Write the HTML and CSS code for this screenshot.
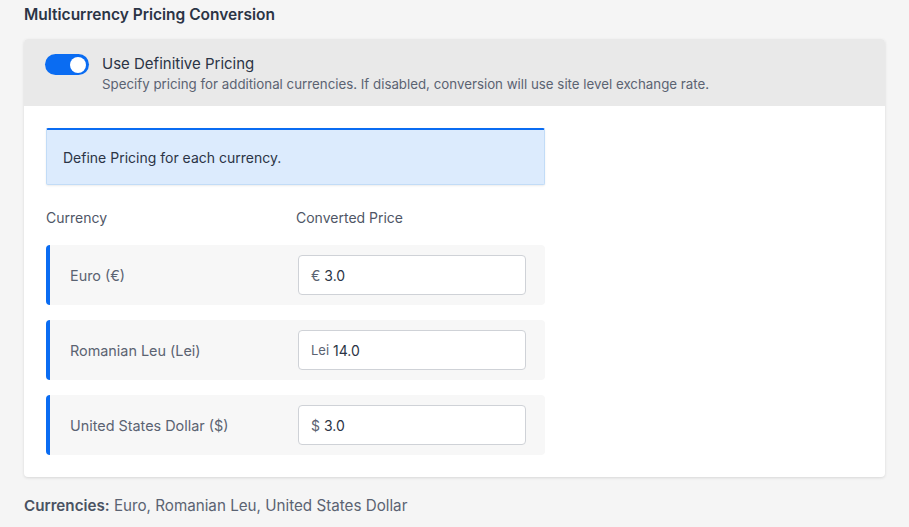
FILE: index.html
```html
<!DOCTYPE html>
<html lang="en">
<head>
    <meta charset="UTF-8">
    <title>Multicurrency Pricing</title>
    <link rel="stylesheet" href="styles.css">
</head>
<body>
    <h2 class="section-title">Multicurrency Pricing Conversion</h2>

    <div class="card">
        <!-- Toggle header -->
        <div class="card-header">
            <label class="switch">
                <input type="checkbox" checked>
                <span class="slider"></span>
            </label>
            <div class="toggle-text">
                <div class="toggle-title">Use Definitive Pricing</div>
                <div class="toggle-desc">Specify pricing for additional currencies. If disabled, conversion will use site level exchange rate.</div>
            </div>
        </div>

        <div class="card-body">
            <div class="notice">Define Pricing for each currency.</div>

            <div class="price-head">
                <span>Currency</span>
                <span>Converted Price</span>
            </div>

            <div class="price-row">
                <span class="currency">Euro (€)</span>
                <div class="price-input"><span class="symbol">€</span> 3.0</div>
            </div>
            <div class="price-row">
                <span class="currency">Romanian Leu (Lei)</span>
                <div class="price-input"><span class="symbol small">Lei</span> 14.0</div>
            </div>
            <div class="price-row">
                <span class="currency">United States Dollar ($)</span>
                <div class="price-input"><span class="symbol">$</span> 3.0</div>
            </div>
        </div>
    </div>

    <p class="summary"><b>Currencies:</b> Euro, Romanian Leu, United States Dollar</p>
</body>
</html>
```

FILE: styles.css
```css
body {
    margin: 0;
    padding: 0 24px;
    background-color: #f5f5f5;
    font-family: Inter, "Noto Sans", sans-serif;
    color: #2b3445;
}

.section-title {
    font-size: 15.5px;
    font-weight: 600;
    margin: 5px 0 14px;
    line-height: 20px;
}

.card {
    width: 861px;
    background-color: #fff;
    border-radius: 4px;
    box-shadow: 0 1px 3px rgba(0, 0, 0, 0.12);
    overflow: hidden;
}

.card-header {
    display: flex;
    align-items: flex-start;
    gap: 13px;
    background-color: #e9e9e9;
    padding: 14px 21px 13px;
}

.switch {
    position: relative;
    width: 44px;
    height: 21px;
    margin-top: 1px;
    flex-shrink: 0;
}

.switch input {
    display: none;
}

.slider {
    position: absolute;
    inset: 0;
    background-color: #0a6cf2;
    border-radius: 11px;
}

.slider::after {
    content: "";
    position: absolute;
    right: 3px;
    top: 2.5px;
    width: 16px;
    height: 16px;
    border-radius: 50%;
    background-color: #fff;
}

.toggle-title {
    font-size: 15px;
    line-height: 22px;
    color: #2b3445;
}

.toggle-desc {
    font-size: 13.3px;
    line-height: 18px;
    color: #5b6372;
}

.card-body {
    padding: 22px 22px 22px;
}

.notice {
    width: 499px;
    box-sizing: border-box;
    height: 57px;
    padding: 0 16px;
    display: flex;
    align-items: center;
    background-color: #dcebfd;
    border: 1px solid #c2dcf7;
    border-top: 2px solid #0a6cf2;
    border-radius: 2px;
    font-size: 14px;
    color: #2b3445;
    box-shadow: 0 1px 2px rgba(0, 0, 0, 0.08);
}

.price-head {
    display: flex;
    margin: 24px 0 19px;
    font-size: 14px;
    color: #4f5666;
}

.price-head span {
    width: 250px;
}

.price-row {
    display: flex;
    align-items: center;
    width: 499px;
    height: 60px;
    box-sizing: border-box;
    margin-bottom: 15px;
    background-color: #f7f7f7;
    border-left: 4px solid #0a6cf2;
    border-radius: 4px;
    padding-left: 20px;
}

.price-row:last-child {
    margin-bottom: 0;
}

.currency {
    width: 228px;
    font-size: 14.4px;
    color: #5b6372;
}

.price-input {
    width: 228px;
    height: 40px;
    box-sizing: border-box;
    background-color: #fff;
    border: 1px solid #cfd2d7;
    border-radius: 4px;
    display: flex;
    align-items: center;
    gap: 4px;
    padding-left: 12px;
    font-size: 14px;
    color: #2b3445;
}

.symbol {
    color: #5b6372;
}

.symbol.small {
    font-size: 13px;
}

.summary {
    margin: 19px 0 0;
    font-size: 15.2px;
    color: #5b6372;
}

.summary b {
    color: #4a5262;
    font-weight: 600;
}
```
